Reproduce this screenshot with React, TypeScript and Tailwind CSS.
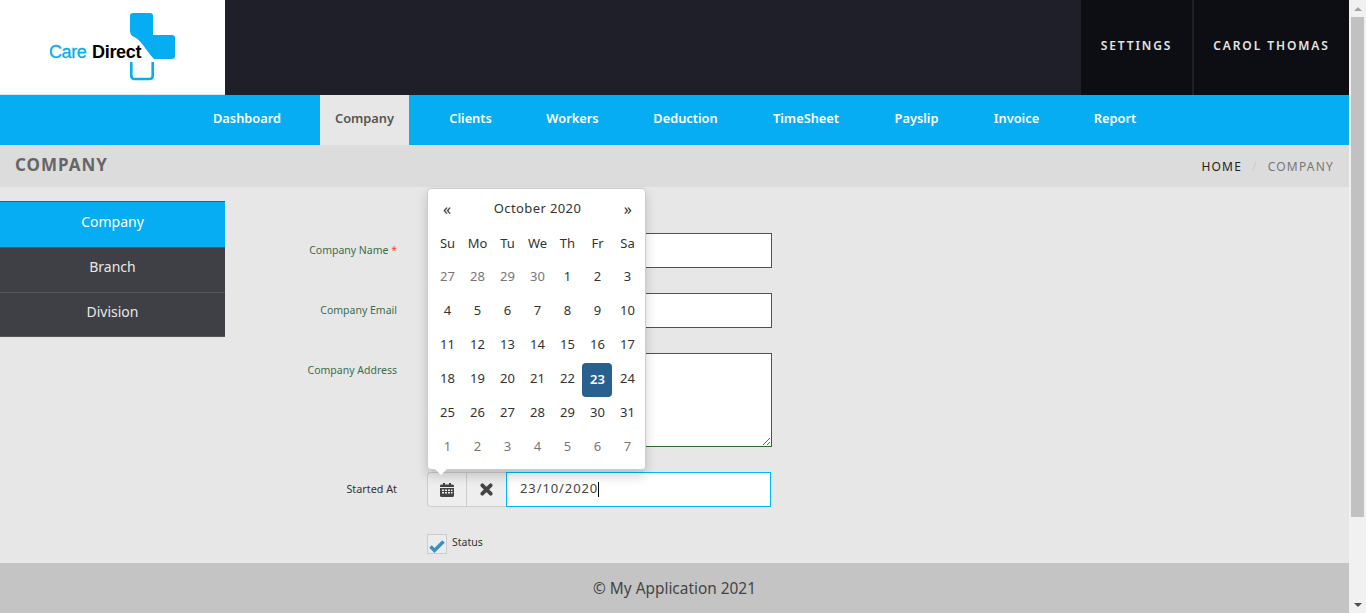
const navItems = [
  { label: 'Dashboard', width: 'w-[122px]', gap: 'mr-[12px]' },
  { label: 'Company', width: 'w-[89px]', gap: '' },
  { label: 'Clients', width: 'w-[123px]', gap: '' },
  { label: 'Workers', width: 'w-[81px]', gap: '' },
  { label: 'Deduction', width: 'w-[145px]', gap: '' },
  { label: 'TimeSheet', width: 'w-[96px]', gap: '' },
  { label: 'Payslip', width: 'w-[125px]', gap: '' },
  { label: 'Invoice', width: 'w-[75px]', gap: '' },
  { label: 'Report', width: 'w-[122px]', gap: '' },
];
const weekDays = ['Su', 'Mo', 'Tu', 'We', 'Th', 'Fr', 'Sa'];

const weeks = [
  [27, 28, 29, 30, 1, 2, 3],
  [4, 5, 6, 7, 8, 9, 10],
  [11, 12, 13, 14, 15, 16, 17],
  [18, 19, 20, 21, 22, 23, 24],
  [25, 26, 27, 28, 29, 30, 31],
  [1, 2, 3, 4, 5, 6, 7],
];

function Logo() {
  return (
    <div className="relative w-[225px] h-[95px] bg-white border-b border-[#e8e6e3] shrink-0">
      <svg className="absolute left-[128px] top-[12px]" width="50" height="70" viewBox="0 0 50 70">
        <path d="M2 4a3 3 0 0 1 3-3h17a3 3 0 0 1 3 3v19h19a3 3 0 0 1 3 3v18a3 3 0 0 1-3 3H26C20 41 15 31 8 26 4 24 2 23 2 18z" fill="#06adf3" />
        <path d="M3.300 50v14a3 3 0 0 0 3 3h15.400a3 3 0 0 0 3-3V50" fill="none" stroke="#06adf3" strokeWidth="2.600" />
      </svg>
      <span className="absolute left-[49px] top-[40px] text-[18px] leading-[24px] tracking-[-0.4px] font-['Liberation_Sans',sans-serif] [-webkit-text-stroke:0.3px_#06adf3] text-[#06adf3]">Care</span>
      <span className="absolute left-[92px] top-[40px] text-[18px] leading-[24px] tracking-[-0.3px] font-['Liberation_Sans',sans-serif] font-bold text-black">Direct</span>
    </div>
  );
}

function Calendar() {
  return (
    <div className="absolute left-0 bottom-[37px] w-[219px] h-[282px] bg-white rounded-[4px] border border-[#ccc] shadow-[0_6px_12px_rgba(0,0,0,0.175)] z-10 text-[13px] text-[#333]">
      <div className="flex items-center justify-between h-[36px] mt-[2px] pl-[15px] pr-[13px]">
        <span className="text-[16px]">«</span>
        <span className="tracking-[0.4px]">October 2020</span>
        <span className="text-[16px]">»</span>
      </div>
      <div className="grid grid-cols-7 w-[210px] mx-[4px]">
        {weekDays.map((d) => (
          <div key={d} className="h-[34px] flex items-center justify-center pl-[1px]">{d}</div>
        ))}
        {weeks.map((week, w) =>
          week.map((day, i) => {
            const muted = (w === 0 && day > 20) || w === 5;
            const active = w === 3 && day === 23;
            return (
              <div
                key={`${w}-${i}`}
                className={`h-[34px] flex items-center justify-center rounded-[4px] pl-[1px] ${active ? 'bg-[#286090] text-white font-semibold' : muted ? 'text-[#777] pb-[2px]' : 'pb-[2px]'}`}
              >
                {day}
              </div>
            );
          }),
        )}
      </div>
      <div className="absolute left-[7px] bottom-[-6px] w-0 h-0 border-x-[6px] border-x-transparent border-t-[6px] border-t-white" />
    </div>
  );
}

function Field({ label, required, children, height }: { label: string; required?: boolean; children?: React.ReactNode; height: string }) {
  return (
    <div className={`flex ${height}`}>
      <label className="w-[172px] text-right text-[10.5px] leading-[16px] pt-[9px] text-[#3c6e4a]">
        {label}
        {required && <span className="text-[#ff3b3b]"> *</span>}
      </label>
      <div className="ml-[30px] w-[345px]">{children}</div>
    </div>
  );
}

export default function App() {
  return (
    <div className="flex w-[1366px] h-[613px] overflow-hidden bg-[#e7e7e7] font-['Noto_Sans',sans-serif]">
      <div className="flex flex-col w-[1349px] h-full">
        {/* Top bar */}
        <header className="flex h-[95px] bg-[#1e1f29] shrink-0">
          <Logo />
          <div className="flex ml-auto h-full text-[12px] font-semibold tracking-[1.9px] text-[#e4e4e4]">
            <div className="w-[111px] bg-[#0d0e13] flex items-center justify-center pb-[4px]">SETTINGS</div>
            <div className="w-[155px] ml-[2px] bg-[#0d0e13] flex items-center justify-center pb-[4px]">CAROL THOMAS</div>
          </div>
        </header>

        {/* Main nav */}
        <nav className="flex h-[50px] bg-[#06adf3] pl-[186px] shrink-0 text-[12.8px] font-semibold text-white">
          {navItems.map((item) => (
            <div
              key={item.label}
              className={`flex items-center justify-center pb-[3px] ${item.width} ${item.gap} ${item.label === 'Company' ? 'bg-[#e7e7e7] text-[#555]' : ''}`}
            >
              {item.label}
            </div>
          ))}
        </nav>

        {/* Breadcrumb */}
        <div className="flex items-center justify-between h-[42px] bg-[#dcdcdc] px-[15px] shrink-0">
          <h1 className="text-[17px] font-bold tracking-[1px] text-[#666] pb-[2px]">COMPANY</h1>
          <div className="flex text-[12px] tracking-[1.2px] pt-[2px]">
            <span className="text-[#222]">HOME</span>
            <span className="mx-[10px] text-[#ccc]">/</span>
            <span className="text-[#777]">COMPANY</span>
          </div>
        </div>

        <main className="flex flex-1 min-h-0">
          {/* Side menu */}
          <aside className="w-[225px] mt-[14px] shrink-0 text-[14px] text-center self-start">
            <div className="h-[46px] flex items-center justify-center pb-[6px] bg-[#06adf3] text-white border-t border-[#555]">Company</div>
            <div className="h-[45px] flex items-center justify-center pb-[8px] bg-[#3f4045] text-[#e8e8e8] border-t border-[#55565a]">Branch</div>
            <div className="h-[45px] flex items-center justify-center pb-[7px] bg-[#3f4045] text-[#e8e8e8] border-y border-[#55565a]">Division</div>
          </aside>

          {/* Form */}
          <form className="flex flex-col pt-[46px]">
            <Field label="Company Name" required height="h-[60px]">
              <input className="w-full h-[35px] bg-white border border-[#2e6b2e] outline-none" />
            </Field>
            <Field label="Company Email" height="h-[60px]">
              <input className="w-full h-[35px] bg-white border border-[#2e6b2e] outline-none" />
            </Field>
            <Field label="Company Address" height="h-[119px]">
              <textarea className="block w-full h-[94px] bg-white border border-[#2e6b2e] outline-none" />
            </Field>
            <div className="flex h-[56px]">
              <label className="w-[172px] text-right text-[10.8px] leading-[16px] pt-[9px] text-[#333]">Started At</label>
              <div className="relative ml-[30px] flex w-[344px] h-[35px]">
                <Calendar />
                <div className="flex w-[79px] border border-[#ccc] border-r-0 rounded-l-[4px] bg-[#eee] text-[#444]">
                  <div className="flex-1 flex items-center justify-center border-r border-[#ccc]">
                    <svg width="14" height="15" viewBox="0 0 14 15" fill="#444">
                      <path d="M0 4a1.500 1.500 0 0 1 1.500-1.500H3V1h2v1.500h4V1h2v1.500h1.500A1.500 1.500 0 0 1 14 4v1H0z" />
                      <path fillRule="evenodd" d="M0 6h14v7.500a1.500 1.500 0 0 1-1.500 1.500h-11A1.500 1.500 0 0 1 0 13.500zm2 1.500V9h2V7.500zm3 0V9h2V7.500zm3 0V9h2V7.500zm3 0V9h1.500V7.500zM2 10v1.500h2V10zm3 0v1.500h2V10zm3 0v1.500h2V10zm3 0v1.500h1.500V10z" />
                    </svg>
                  </div>
                  <div className="flex-1 flex items-center justify-center pr-[1px] pb-[1px]">
                    <svg width="13" height="13" viewBox="0 0 14 14" fill="none" stroke="#444" strokeWidth="4" strokeLinecap="round">
                      <path d="M2.500 2.500l9 9M11.500 2.500l-9 9" />
                    </svg>
                  </div>
                </div>
                <div className="flex-1 flex items-center bg-white border border-[#00b7ff] pl-[13px] pb-[1px] text-[13px] tracking-[0.9px] text-[#444]">
                  23/10/2020
                  <span className="w-px h-[15px] bg-black" />
                </div>
              </div>
            </div>
            <div className="flex">
              <div className="w-[202px]" />
              <div className="flex w-[20px] h-[20px] border border-[#ccc] items-center justify-center mt-[6px] bg-[#ececec]">
                <svg width="16" height="14" viewBox="0 0 16 14" fill="none" stroke="#3d8ec4" strokeWidth="3.500" className="mt-[3px]">
                  <path d="M1.500 7.500l4 4 9-9" />
                </svg>
              </div>
              <span className="ml-[5px] mt-[4px] text-[10.5px] leading-[20px] text-[#333]">Status</span>
            </div>
          </form>
        </main>

        <footer className="h-[50px] bg-[#c4c4c4] flex items-center justify-center pt-[2px] shrink-0 text-[15.4px] text-[#444]">
          © My Application 2021
        </footer>
      </div>

      {/* Scrollbar */}
      <div className="flex flex-col w-[17px] h-full bg-[#f1f1f1] shrink-0">
        <div className="h-[17px] flex items-center justify-center">
          <div className="w-0 h-0 border-x-[4px] border-x-transparent border-b-[4px] border-b-[#a3a3a3]" />
        </div>
        <div className="h-[500px] mx-[2px] bg-[#c1c1c1]" />
        <div className="mt-auto h-[17px] flex items-center justify-center">
          <div className="w-0 h-0 border-x-[4px] border-x-transparent border-t-[4px] border-t-[#505050]" />
        </div>
      </div>
    </div>
  );
}
